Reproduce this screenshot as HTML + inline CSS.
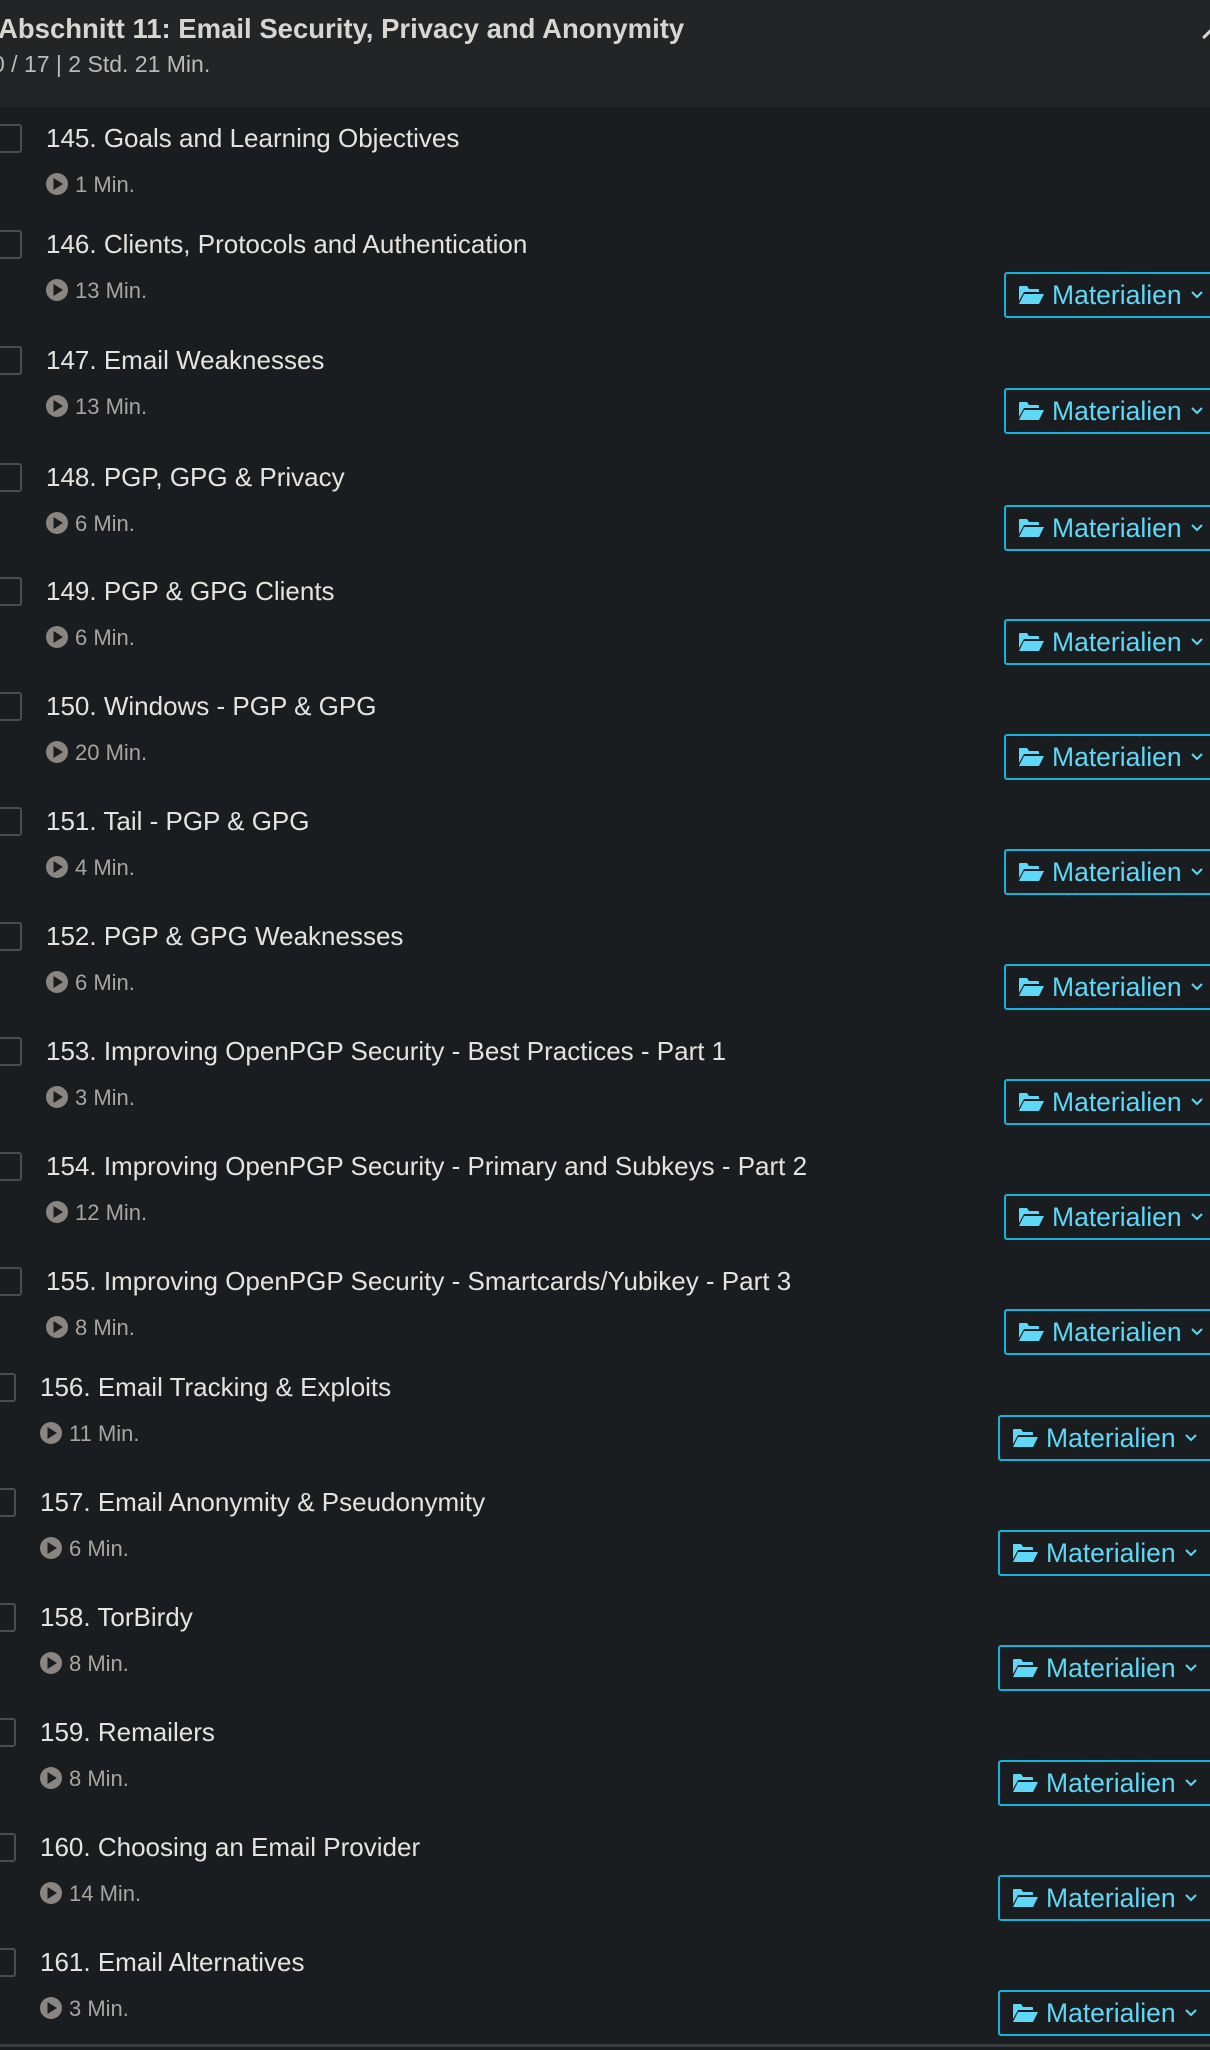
<!DOCTYPE html>
<html><head><meta charset="utf-8"><style>
*{margin:0;padding:0;box-sizing:border-box}
html,body{width:1210px;height:2050px;overflow:hidden;background:#1a1d1f;font-family:"Liberation Sans",sans-serif}
.hdr{position:absolute;left:0;top:0;width:1210px;height:107px;background:#222426}
.ht{position:absolute;left:-2px;top:13px;font-size:27.5px;font-weight:bold;color:#d9d6d1;white-space:nowrap}
.hs{position:absolute;left:-8px;top:51px;font-size:23px;color:#bdbab5;white-space:nowrap}
.car{position:absolute;left:1205px;top:30px;width:14px;height:14px;border-left:3px solid #d9d6d1;border-top:3px solid #d9d6d1;transform:rotate(45deg)}
.cb{position:absolute;left:-8px;width:30px;height:29px;border:2px solid #4a4d50;border-radius:3px}
.t{position:absolute;font-size:26px;color:#e6e3de;white-space:nowrap;line-height:28px}
.d{position:absolute;font-size:22px;color:#a8a49f;white-space:nowrap;line-height:24px}
.d svg{position:absolute;left:-29px;top:0px}
.btn{position:absolute;width:230px;height:46px;border:2px solid #12b4dc;border-radius:3px;color:#5fd8f7;font-size:26.5px;line-height:42px;white-space:nowrap}
.btn svg.f{position:absolute;left:12px;top:11px}
.btn span{position:absolute;left:46px;top:0}
.btn svg.c{position:absolute;left:184px;top:16px}
.line{position:absolute;left:0;top:2044px;width:1210px;height:3px;background:#3a3d40}
</style></head><body>
<div class="hdr"><div class="ht">Abschnitt 11: Email Security, Privacy and Anonymity</div><div class="hs">0 / 17 | 2 Std. 21 Min.</div><div class="car"></div></div>

<div id="rows"></div>
<div class="line"></div>

<script>
var rows=[
[145,"Goals and Learning Objectives",138,"1 Min.",0,1],
[146,"Clients, Protocols and Authentication",244,"13 Min.",0],
[147,"Email Weaknesses",360,"13 Min.",0],
[148,"PGP, GPG &amp; Privacy",477,"6 Min.",0],
[149,"PGP &amp; GPG Clients",591,"6 Min.",0],
[150,"Windows - PGP &amp; GPG",706,"20 Min.",0],
[151,"Tail - PGP &amp; GPG",821,"4 Min.",0],
[152,"PGP &amp; GPG Weaknesses",936,"6 Min.",0],
[153,"Improving OpenPGP Security - Best Practices - Part 1",1051,"3 Min.",0],
[154,"Improving OpenPGP Security - Primary and Subkeys - Part 2",1166,"12 Min.",0],
[155,"Improving OpenPGP Security - Smartcards/Yubikey - Part 3",1281,"8 Min.",0],
[156,"Email Tracking &amp; Exploits",1387,"11 Min.",6],
[157,"Email Anonymity &amp; Pseudonymity",1502,"6 Min.",6],
[158,"TorBirdy",1617,"8 Min.",6],
[159,"Remailers",1732,"8 Min.",6],
[160,"Choosing an Email Provider",1847,"14 Min.",6],
[161,"Email Alternatives",1962,"3 Min.",6]];
var h="";
rows.forEach(function(r){
var y=r[2],s=r[4];
h+='<div class="cb" style="top:'+(y-14)+'px;left:'+(-8-s)+'px"></div>';
h+='<div class="t" style="left:'+(46-s)+'px;top:'+(y-14)+'px">'+r[0]+'. '+r[1]+'</div>';
h+='<div class="d" style="left:'+(75-s)+'px;top:'+(y+35)+'px"><svg width="22" height="22" viewBox="0 0 22 22"><circle cx="11" cy="11" r="11" fill="#8a8580"/><path d="M7.5 5 L17 11 L7.5 17Z" fill="#1a1d1f"/></svg>'+r[3]+'</div>';
if(!r[5]) h+='<div class="btn" style="left:'+(1004-s)+'px;top:'+(y+28)+'px"><svg class="f" width="27" height="20" viewBox="0 0 27 20"><path d="M1 2 Q1 1 2 1 H9 L11 4 H20 Q21 4 21 5 V7 H6 L1 16Z" fill="#5fd8f7"/><path d="M6 9 H26 L21 19 H1Z" fill="#5fd8f7"/></svg><span>Materialien</span><svg class="c" width="14" height="10" viewBox="0 0 14 10"><path d="M2 2 L7 7 L12 2" fill="none" stroke="#5fd8f7" stroke-width="2"/></svg></div>';
});
document.getElementById("rows").innerHTML=h;
</script>
</body></html>
